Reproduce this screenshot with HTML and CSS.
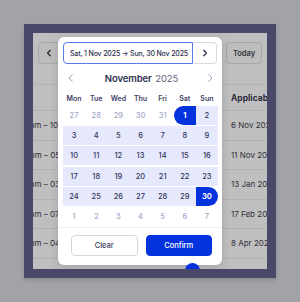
FILE: index.html
```html
<!DOCTYPE html>
<html>
<head>
<meta charset="utf-8">
<link rel="stylesheet" href="styles.css">
</head>
<body>
<div class="frame">
  <div class="screen">
    <div class="toolbar">
      <button class="tb-btn tb-icon" aria-label="Previous">
        <svg width="8" height="8" viewBox="0 0 8 8"><path d="M5.2 1.2 L2.6 4 L5.2 6.8" fill="none" stroke="#2e2e34" stroke-width="1.3" stroke-linecap="round" stroke-linejoin="round"/></svg>
      </button>
      <button class="tb-btn tb-today">Today</button>
    </div>
    <div class="table">
      <div class="row head"><div class="c1">Time</div><div class="c2">Applicable</div></div>
      <div class="row"><div class="c1">09:00 am – 10:00 am</div><div class="c2">6 Nov 2025</div></div>
      <div class="row"><div class="c1">04:30 pm – 05:30 pm</div><div class="c2">11 Nov 2025</div></div>
      <div class="row"><div class="c1">02:00 pm – 03:00 pm</div><div class="c2">13 Jan 2025</div></div>
      <div class="row"><div class="c1">06:30 pm – 07:30 pm</div><div class="c2">17 Feb 2025</div></div>
      <div class="row"><div class="c1">03:00 pm – 04:00 pm</div><div class="c2">8 Apr 2024</div></div>
      <div class="row"><div class="c1">01:00 pm – 02:00 pm</div><div class="c2">2 Mar 2024</div></div>
    </div>
    <div class="fab"></div>
    <div class="picker">
      <div class="range-input">
        <div class="field">Sat, 1 Nov 2025 → Sun, 30 Nov 2025</div>
        <button class="next-btn" aria-label="Next">
          <svg width="8" height="8" viewBox="0 0 8 8"><path d="M2.8 1.2 L5.4 4 L2.8 6.8" fill="none" stroke="#2c2f4d" stroke-width="1.3" stroke-linecap="round" stroke-linejoin="round"/></svg>
        </button>
      </div>
      <div class="month-nav">
        <span class="nav"><svg width="10" height="10" viewBox="0 0 10 10"><path d="M6.3 1.5 L3 5 L6.3 8.5" fill="none" stroke="#9ea1bd" stroke-width="1" stroke-linecap="round" stroke-linejoin="round"/></svg></span>
        <div class="title"><b>November</b> <span>2025</span></div>
        <span class="nav"><svg width="10" height="10" viewBox="0 0 10 10"><path d="M3.7 1.5 L7 5 L3.7 8.5" fill="none" stroke="#9ea1bd" stroke-width="1" stroke-linecap="round" stroke-linejoin="round"/></svg></span>
      </div>
      <div class="weekdays">
        <span>Mon</span><span>Tue</span><span>Wed</span><span>Thu</span><span>Fri</span><span>Sat</span><span>Sun</span>
      </div>
      <div class="days">
        <span class="d out">27</span><span class="d out">28</span><span class="d out">29</span><span class="d out">30</span><span class="d out">31</span><span class="d sel start">1</span><span class="d in">2</span>
        <span class="d in">3</span><span class="d in">4</span><span class="d in">5</span><span class="d in">6</span><span class="d in">7</span><span class="d in">8</span><span class="d in">9</span>
        <span class="d in">10</span><span class="d in">11</span><span class="d in">12</span><span class="d in">13</span><span class="d in">14</span><span class="d in">15</span><span class="d in">16</span>
        <span class="d in">17</span><span class="d in">18</span><span class="d in">19</span><span class="d in">20</span><span class="d in">21</span><span class="d in">22</span><span class="d in">23</span>
        <span class="d in">24</span><span class="d in">25</span><span class="d in">26</span><span class="d in">27</span><span class="d in">28</span><span class="d in">29</span><span class="d sel end">30</span>
        <span class="d out">1</span><span class="d out">2</span><span class="d out">3</span><span class="d out">4</span><span class="d out">5</span><span class="d out">6</span><span class="d out">7</span>
      </div>
      <div class="footer">
        <button class="btn clear">Clear</button>
        <button class="btn confirm">Confirm</button>
      </div>
    </div>
  </div>
</div>
</body>
</html>
```

FILE: styles.css
```css
* { box-sizing: border-box; }
html, body { margin: 0; padding: 0; }
body {
  width: 300px;
  height: 302px;
  background: #a1a3a8;
  font-family: Inter, "Noto Sans", "Liberation Sans", sans-serif;
  overflow: hidden;
}
.frame {
  margin: 24px;
  width: 252px;
  height: 254px;
  background: #4a4868;
  padding: 9px;
  box-shadow: 0 2px 4px rgba(0,0,0,0.15);
}
.screen {
  position: relative;
  width: 234px;
  height: 236px;
  background: #bfbfbf;
  overflow: hidden;
}
.toolbar {
  height: 52px;
  padding: 9px 5px 0 5px;
  display: flex;
  justify-content: space-between;
  align-items: flex-start;
  border-bottom: 1px solid #b4b4b6;
}
.tb-btn {
  height: 22px;
  border: 1px solid #a8a8aa;
  background: #bdbdbd;
  border-radius: 4px;
  padding: 0;
  font-family: inherit;
  display: flex;
  align-items: center;
  justify-content: center;
}
.tb-icon { width: 22px; }
.tb-today {
  width: 36px;
  font-size: 7.5px;
  font-weight: 600;
  color: #333338;
}
.table {
  margin-left: -28px;
  font-size: 8px;
  color: #2f2f38;
}
.row {
  display: flex;
  align-items: center;
  height: 29.5px;
  border-bottom: 1px solid #b3b3b5;
  white-space: nowrap;
}
.row.head {
  height: 26px;
  font-size: 8.5px;
  font-weight: 700;
  color: #2c2c3a;
}
.row.head .c1 { visibility: hidden; }
.c1 { width: 226px; flex: none; }
.c2 { flex: none; }
.fab {
  position: absolute;
  left: 152px;
  top: 230px;
  width: 15px;
  height: 15px;
  border-radius: 50%;
  background: #0433de;
  z-index: 3;
}
.picker {
  position: absolute;
  left: 25px;
  top: 4px;
  width: 164px;
  background: #ffffff;
  border-radius: 6px;
  box-shadow: 0 2px 8px rgba(30,30,60,0.18);
  padding: 5px 4px 0 5px;
  z-index: 2;
}
.range-input {
  display: flex;
  height: 22px;
}
.field {
  width: 130px;
  height: 22px;
  border: 1.5px solid #5a78f2;
  border-radius: 4px 0 0 4px;
  display: flex;
  align-items: center;
  padding-left: 6px;
  font-size: 7px;
  font-weight: 500;
  color: #2c2f4d;
  letter-spacing: -0.15px;
  white-space: nowrap;
  overflow: hidden;
}
.next-btn {
  width: 24px;
  height: 22px;
  border: 1px solid #d8dae4;
  border-left: none;
  border-radius: 0 4px 4px 0;
  background: #fff;
  padding: 0;
  display: flex;
  align-items: center;
  justify-content: center;
}
.month-nav {
  margin-top: 4px;
  height: 20px;
  display: flex;
  align-items: center;
  justify-content: space-between;
  padding: 0 3px 0 3px;
}
.nav { display: flex; width: 10px; height: 10px; }
.title {
  font-size: 9.5px;
  color: #2e3150;
  letter-spacing: -0.1px;
  padding-left: 2px;
}
.title b { font-weight: 600; }
.title span { color: #5d607c; font-weight: 400; margin-left: 1px; }
.weekdays {
  margin-top: 2px;
  height: 16px;
  display: grid;
  grid-template-columns: repeat(7, 1fr);
  align-items: center;
  width: 155px;
  font-size: 7px;
  font-weight: 600;
  color: #3d405f;
  text-align: center;
}
.days {
  display: grid;
  width: 155px;
  grid-template-columns: repeat(7, 1fr);
  grid-auto-rows: 19px;
  row-gap: 1.2px;
}
.d {
  display: flex;
  align-items: center;
  justify-content: center;
  font-size: 7.5px;
  font-weight: 500;
  color: #33365a;
}
.d.out { color: #a4a7cb; }
.d.in { background: #e6e9fc; }
.d.sel { background: #0433de; color: #fff; font-weight: 700; }
.d.start { border-radius: 10px 0 0 10px; }
.d.end { border-radius: 0 10px 10px 0; }
.footer {
  margin: 1px -4px 0 -5px;
  border-top: 1px solid #eceef4;
  padding: 7px 10px 9px 13px;
  display: flex;
  gap: 8px;
}
.btn {
  flex: 1;
  height: 21px;
  border-radius: 4px;
  font-family: inherit;
  font-size: 7.5px;
  font-weight: 500;
  padding: 0;
}
.clear {
  background: #fff;
  border: 1px solid #d3d5e1;
  color: #3a3d5c;
}
.confirm {
  background: #0433de;
  border: 1px solid #0433de;
  color: #fff;
}
```
